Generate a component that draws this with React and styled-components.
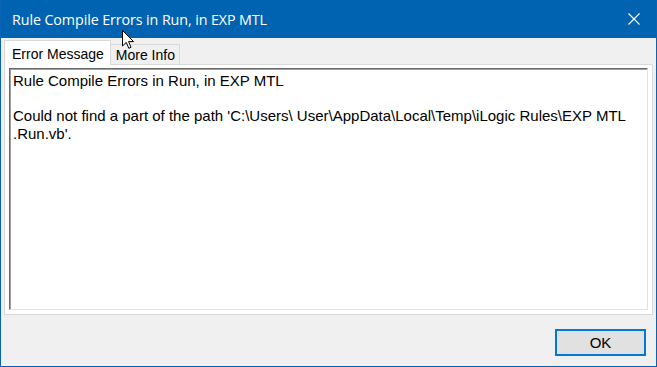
import React from 'react';
import styled, { createGlobalStyle } from 'styled-components';

const Global = createGlobalStyle`
  html, body {
    margin: 0;
    padding: 0;
    background: #f0f0f0;
  }
  body {
    font-family: "Liberation Sans", Arial, sans-serif;
  }
`;

const lines = [
  'Rule Compile Errors in Run, in EXP MTL',
  '',
  "Could not find a part of the path 'C:\\Users\\ User\\AppData\\Local\\Temp\\iLogic Rules\\EXP MTL",
  ".Run.vb'.",
];

export default function App() {
  return (
    <>
      <Global />
      <Window>
        <TitleBar>
          <Title>Rule Compile Errors in Run, in EXP MTL</Title>
          <CloseButton aria-label="Close">
            <svg width="12" height="12" viewBox="0 0 12 12">
              <path d="M0.5 0.5 L11.5 11.5 M11.5 0.5 L0.5 11.5" stroke="#fff" strokeWidth="1.1" fill="none" />
            </svg>
          </CloseButton>
        </TitleBar>
        <Body>
          <TabStrip>
            <Tab active>Error Message</Tab>
            <Tab>More Info</Tab>
          </TabStrip>
          <Panel>
            <TextBox>
              {lines.map((l, i) => (
                <Line key={i}>{l || '\u00a0'}</Line>
              ))}
            </TextBox>
          </Panel>
          <Footer>
            <OkButton>OK</OkButton>
          </Footer>
        </Body>
        <Cursor width="13" height="20" viewBox="0 0 13 20">
          <path
            d="M0.5 0.5 L0.5 16 L4.3 12.4 L6.8 18.3 L9 17.3 L6.6 11.6 L11.6 11.6 Z"
            fill="#fff"
            stroke="#000"
            strokeWidth="1"
            strokeLinejoin="miter"
          />
        </Cursor>
      </Window>
    </>
  );
}

const Window = styled.div`
  position: relative;
  width: 657px;
  height: 367px;
  box-sizing: border-box;
  border: 1px solid #0a62b0;
  border-top: none;
  background: #f0f0f0;
  display: flex;
  flex-direction: column;
  overflow: hidden;
`;

const TitleBar = styled.div`
  height: 38px;
  flex: none;
  margin: 0 -1px;
  background: #0063b1;
  display: flex;
  align-items: center;
  justify-content: space-between;
  padding-left: 12px;
`;

const Title = styled.div`
  color: #fff;
  font-family: "Open Sans", "Noto Sans", sans-serif;
  font-size: 14.3px;
  letter-spacing: -0.1px;
  margin-top: 1px;
`;

const CloseButton = styled.div`
  width: 46px;
  height: 38px;
  display: flex;
  align-items: center;
  justify-content: center;
`;

const Body = styled.div`
  flex: 1;
  display: flex;
  flex-direction: column;
  padding: 2px 3px 0 3px;
`;

const TabStrip = styled.div`
  display: flex;
  align-items: flex-end;
  height: 25px;
  position: relative;
  z-index: 1;
  margin-bottom: -1px;
`;

const Tab = styled.div`
  box-sizing: border-box;
  height: ${p => (p.active ? '25px' : '21px')};
  padding: ${p => (p.active ? '1px 6px 0 7px' : '1px 4px 0 5px')};
  margin-left: ${p => (p.active ? '0' : '-1px')};
  background: ${p => (p.active ? '#ffffff' : '#f0f0f0')};
  border: 1px solid #d9d9d9;
  border-bottom: ${p => (p.active ? 'none' : '1px solid #d9d9d9')};
  font-size: 14px;
  color: #000;
  display: flex;
  align-items: center;
  white-space: nowrap;
`;

const Panel = styled.div`
  box-sizing: border-box;
  height: 251px;
  background: #ffffff;
  border: 1px solid #d9d9d9;
  padding: 3px 4px 4px 4px;
  display: flex;
`;

const TextBox = styled.div`
  flex: 1;
  box-sizing: border-box;
  background: #fff;
  border-top: 1px solid #696969;
  border-left: 1px solid #696969;
  border-right: 1px solid #e3e3e3;
  border-bottom: 1px solid #e3e3e3;
  box-shadow: inset 1px 1px 0 #a0a0a0;
  padding: 3px 3px;
  font-size: 15px;
  line-height: 17.5px;
  color: #000;
`;

const Line = styled.div`
  white-space: pre;
`;

const Footer = styled.div`
  flex: 1;
  display: flex;
  justify-content: flex-end;
  align-items: flex-start;
  padding: 14px 7px 0 0;
`;

const OkButton = styled.div`
  box-sizing: border-box;
  width: 91px;
  height: 27px;
  background: #e1e1e1;
  border: 2px solid #0078d7;
  display: flex;
  align-items: center;
  justify-content: center;
  font-size: 15px;
  color: #000;
`;

const Cursor = styled.svg`
  position: absolute;
  left: 121px;
  top: 30px;
  z-index: 5;
`;
